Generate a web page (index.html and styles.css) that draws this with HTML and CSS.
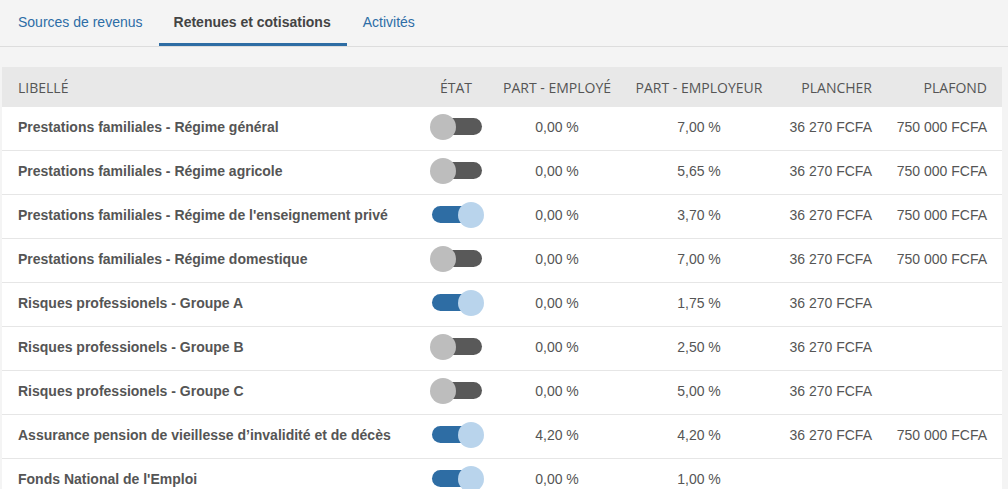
FILE: index.html
```html
<!DOCTYPE html>
<html lang="fr">
<head>
<meta charset="utf-8">
<title>Retenues et cotisations</title>
<link rel="stylesheet" href="styles.css">
</head>
<body>
<nav class="tabs">
  <a class="tab">Sources de revenus</a>
  <a class="tab active">Retenues et cotisations</a>
  <a class="tab">Activités</a>
</nav>
<div class="content">
<table class="grid">
  <colgroup>
    <col class="c-lib"><col class="c-etat"><col class="c-emp"><col class="c-empr"><col class="c-pl"><col class="c-pf">
  </colgroup>
  <thead>
    <tr>
      <th class="left">Libellé</th>
      <th class="center">État</th>
      <th class="center">Part - employé</th>
      <th class="center">Part - employeur</th>
      <th class="right">Plancher</th>
      <th class="right">Plafond</th>
    </tr>
  </thead>
  <tbody>
    <tr><td class="lib">Prestations familiales - Régime général</td><td class="state"><span class="toggle"></span></td><td class="center">0,00 %</td><td class="center">7,00 %</td><td class="right">36 270 FCFA</td><td class="right">750 000 FCFA</td></tr>
    <tr><td class="lib">Prestations familiales - Régime agricole</td><td class="state"><span class="toggle"></span></td><td class="center">0,00 %</td><td class="center">5,65 %</td><td class="right">36 270 FCFA</td><td class="right">750 000 FCFA</td></tr>
    <tr><td class="lib">Prestations familiales - Régime de l'enseignement privé</td><td class="state"><span class="toggle on"></span></td><td class="center">0,00 %</td><td class="center">3,70 %</td><td class="right">36 270 FCFA</td><td class="right">750 000 FCFA</td></tr>
    <tr><td class="lib">Prestations familiales - Régime domestique</td><td class="state"><span class="toggle"></span></td><td class="center">0,00 %</td><td class="center">7,00 %</td><td class="right">36 270 FCFA</td><td class="right">750 000 FCFA</td></tr>
    <tr><td class="lib">Risques professionels - Groupe A</td><td class="state"><span class="toggle on"></span></td><td class="center">0,00 %</td><td class="center">1,75 %</td><td class="right">36 270 FCFA</td><td class="right"></td></tr>
    <tr><td class="lib">Risques professionels - Groupe B</td><td class="state"><span class="toggle"></span></td><td class="center">0,00 %</td><td class="center">2,50 %</td><td class="right">36 270 FCFA</td><td class="right"></td></tr>
    <tr><td class="lib">Risques professionels - Groupe C</td><td class="state"><span class="toggle"></span></td><td class="center">0,00 %</td><td class="center">5,00 %</td><td class="right">36 270 FCFA</td><td class="right"></td></tr>
    <tr><td class="lib">Assurance pension de vieillesse d’invalidité et de décès</td><td class="state"><span class="toggle on"></span></td><td class="center">4,20 %</td><td class="center">4,20 %</td><td class="right">36 270 FCFA</td><td class="right">750 000 FCFA</td></tr>
    <tr><td class="lib">Fonds National de l'Emploi</td><td class="state"><span class="toggle on"></span></td><td class="center">0,00 %</td><td class="center">1,00 %</td><td class="right"></td><td class="right"></td></tr>
  </tbody>
</table>
</div>
</body>
</html>
```
FILE: styles.css
```css
html, body {
  margin: 0;
  padding: 0;
  background: #f4f4f4;
  font-family: "Liberation Sans", Arial, sans-serif;
  color: #555;
}
.tabs {
  display: flex;
  height: 47px;
  border-bottom: 1px solid #dddddd;
  box-sizing: border-box;
  padding-left: 2px;
}
.tab {
  display: block;
  padding: 14px 16px 0;
  font-size: 14px;
  line-height: 16px;
  color: #2d6da6;
  box-sizing: border-box;
  height: 46px;
}
.tab.active {
  color: #444;
  font-weight: bold;
  border-bottom: 3px solid #2e6da4;
  padding-left: 15px;
  padding-right: 16px;
}
.content {
  padding: 20px 6px 0 2px;
}
.grid {
  width: 1000px;
  border-collapse: collapse;
  table-layout: fixed;
  background: #fff;
}
.c-lib { width: 413px; }
.c-etat { width: 82px; }
.c-emp { width: 120px; }
.c-empr { width: 164px; }
.c-pl { width: 106px; }
.c-pf { width: 115px; }
.grid thead th {
  background: #e8e8e8;
  height: 40px;
  padding: 0 15px;
  font-family: "Open Sans", sans-serif;
  font-weight: normal;
  font-size: 14px;
  text-transform: uppercase;
  color: #555;
  white-space: nowrap;
}
.grid thead th.left { padding-left: 16px; }
.grid thead th.center { padding: 0; }
.grid thead th.right { padding-left: 0; }
.grid td {
  height: 39px;
  padding: 0 15px 4px;
  font-size: 14px;
  color: #555;
  border-bottom: 1px solid #e6e6e6;
  white-space: nowrap;
  vertical-align: middle;
}
.grid td.lib {
  padding-left: 16px;
  font-weight: bold;
}
.grid td.center { padding-left: 0; padding-right: 0; }
.grid td.right { padding-left: 0; }
.grid td.state {
  padding-left: 0;
  padding-right: 0;
  text-align: center;
}
.left { text-align: left; }
.center { text-align: center; }
.right { text-align: right; }
.toggle {
  display: inline-block;
  position: relative;
  width: 50px;
  height: 17px;
  border-radius: 8.5px;
  background: #595959;
  vertical-align: middle;
  margin-left: 2px;
}
.toggle::after {
  content: "";
  position: absolute;
  top: -4.5px;
  left: -2px;
  width: 26px;
  height: 26px;
  border-radius: 50%;
  background: #bdbdbd;
}
.toggle.on { background: #2e6da4; }
.toggle.on::after {
  left: auto;
  right: -2px;
  background: #b9d4ec;
}
```
